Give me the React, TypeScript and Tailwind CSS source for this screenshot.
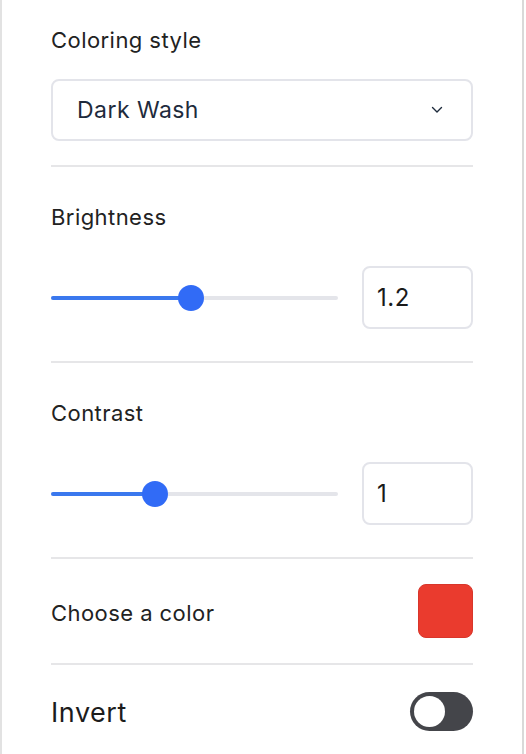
const FONT = "font-['Inter',_'Liberation_Sans',_sans-serif]";

function Divider() {
  return <div className="h-[2px] w-full bg-[#e6e6e8]" />;
}

function Chevron() {
  return (
    <svg width="12" height="8" viewBox="0 0 12 8" fill="none">
      <path d="M1.5 1.5 6 6l4.5-4.5" stroke="#1e2b3c" strokeWidth="1.4" strokeLinecap="round" strokeLinejoin="round" />
    </svg>
  );
}

function SliderRow({ value, pos }: { value: string; pos: number }) {
  return (
    <div className="flex h-[63px] items-center gap-6">
      <div className="relative h-1 flex-1 rounded-full bg-[#e4e5ea]">
        <div className="absolute left-0 top-0 h-1 rounded-full bg-[#3a78ee]" style={{ width: `${pos}px` }} />
        <div
          className="absolute top-1/2 h-[26px] w-[26px] -translate-x-1/2 -translate-y-1/2 rounded-full bg-[#316bf6]"
          style={{ left: `${pos}px` }}
        />
      </div>
      <div className="flex h-[63px] w-[111px] items-center rounded-lg border-2 border-[#e3e4ea] px-[13px] text-[24px] tracking-[0.02em] text-[#1a1a1a]">
        {value}
      </div>
    </div>
  );
}

export default function App() {
  return (
    <div className={`flex h-[754px] w-[526px] bg-white font-normal ${FONT}`}>
      <div className="w-[2px] bg-[#e2e2e2]" />
      <div className="flex w-[471px] flex-col pl-[49px]">
        <div className="flex flex-col pt-[26px]">
          <div className="h-7 text-[22px] leading-7 tracking-[0.02em] text-[#222]">Coloring style</div>
          <div className="mt-[25px] flex h-[62px] items-center justify-between rounded-lg border-2 border-[#e3e4ea] pl-6 pr-7">
            <span className="text-[23px] tracking-[0.02em] text-[#1e2b3c]">Dark Wash</span>
            <Chevron />
          </div>
          <div className="h-6" />
          <Divider />
        </div>

        <div className="flex flex-col pt-9">
          <div className="h-7 text-[22px] leading-7 tracking-[0.02em] text-[#222]">Brightness</div>
          <div className="mt-[35px]">
            <SliderRow value="1.2" pos={140} />
          </div>
          <div className="h-8" />
          <Divider />
        </div>

        <div className="flex flex-col pt-9">
          <div className="h-7 text-[22px] leading-7 tracking-[0.02em] text-[#222]">Contrast</div>
          <div className="mt-[35px]">
            <SliderRow value="1" pos={104} />
          </div>
          <div className="h-8" />
          <Divider />
        </div>

        <div className="flex items-center justify-between py-[25px]">
          <span className="pt-1 text-[22px] tracking-[0.02em] text-[#222]">Choose a color</span>
          <div className="h-[54px] w-[55px] rounded-lg border border-[#d8362b] bg-[#ea3b2e]" />
        </div>
        <Divider />

        <div className="flex items-center justify-between pt-6">
          <span className="pt-1 text-[27px] tracking-[0.02em] text-[#1c1c1c]">Invert</span>
          <div className="flex h-[39px] w-[63px] items-center rounded-full bg-[#44454a] pl-1">
            <div className="h-[31px] w-[31px] rounded-full bg-white" />
          </div>
        </div>
      </div>
      <div className="flex-1" />
      <div className="w-[2px] bg-[#d9d9d9]" />
      <div className="w-[2px] bg-white" />
    </div>
  );
}
